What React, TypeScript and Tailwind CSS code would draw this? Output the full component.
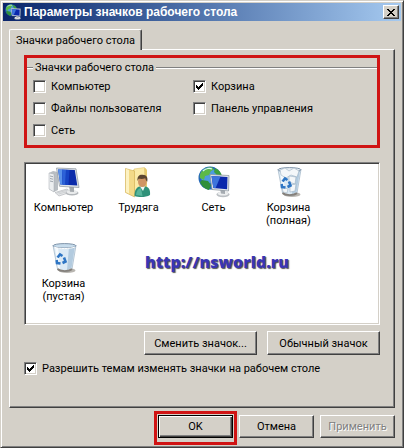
import { useState, type ReactNode } from "react";

const RAISED =
  "border border-t-white border-l-white border-r-[#404040] border-b-[#404040] shadow-[inset_-1px_-1px_0_#808080]";

function MonitorIcon() {
  return (
    <svg viewBox="0 0 32 32" className="size-8" aria-hidden="true">
      <path d="M1 7 5 5l5 1v18l-4 2-5-3z" fill="#b9bec3" />
      <path d="M1 7l5 1v18l-5-3z" fill="#eceef0" stroke="#a4aab0" strokeWidth=".5" />
      <path d="M2 10l3 .7M2 12.500l3 .7M2 15l3 .7" stroke="#7d8790" strokeWidth=".7" />
      <path d="M7 26.500 19 23l4 3-12 4z" fill="#e6e8ea" stroke="#a9adb1" strokeWidth=".6" />
      <path d="M9 27l11-3M10.500 28l11-3" stroke="#b4b8bc" strokeWidth=".5" />
      <ellipse cx="24" cy="27" rx="6.500" ry="2.600" fill="#b3b7bb" />
      <ellipse cx="24" cy="26" rx="5.500" ry="2" fill="#e9ebec" />
      <path d="M21 20l5 1v5l-4-.3z" fill="#a4a9ae" />
      <path d="M8.500 2l19.500.8 3 18.700-19.500-1.200z" fill="#dfe3e8" stroke="#8d959e" strokeWidth=".7" />
      <path d="M10 3.400l16.800.7 2.500 15.500-17-1z" fill="#0c2baa" />
      <path d="M10 3.400l4 .2.500 15.200-2.200-.2z" fill="#5a93ea" />
      <path d="M14 3.600l4 .1-.5 15.200-3-.1z" fill="#2c62d8" />
      <path d="M18 3.700l3.500.2-1 15.200-3-.2z" fill="#1644c4" />
    </svg>
  );
}

function UserFolderIcon() {
  return (
    <svg viewBox="0 0 32 32" className="size-8" aria-hidden="true">
      <path d="M10 4l12.500-2 1.500 2v23l-12 3z" fill="#e6cb70" />
      <path d="M11 3l10.500-1.500.8 25L11 29z" fill="#fbeaa6" stroke="#d8ba62" strokeWidth=".5" />
      <path d="M2.500 2.500l9 2.500V31l-9-4.500z" fill="#f3da88" stroke="#d0ae50" strokeWidth=".6" />
      <path d="M3 3l3 .9v23.600l-3-1.400z" fill="#fdf2c2" />
      <path d="M11.500 30c0-6 2-9 5.500-9.500h5c4 .5 5.500 3.500 5 8.500-4 2.500-11 2.700-15.500 1z" fill="#2f9179" />
      <path d="M13 29c.3-4 2-6.500 5-7l1.500 8z" fill="#57b59b" />
      <path d="M17 20.500h5l-2 4.500z" fill="#f3f8f4" />
      <ellipse cx="19.300" cy="15.800" rx="4.300" ry="5.300" fill="#cf9564" />
      <path d="M14.500 15c-.5-5 2-6.500 5.200-6.200 4 0 5.500 3 4.500 7-1-1-1.500-2-2-3.500-2.500 1-5 .5-6.500.5z" fill="#5b4530" />
    </svg>
  );
}

function NetworkIcon({ className }: { className?: string }) {
  return (
    <svg viewBox="0 0 32 32" className={className} aria-hidden="true">
      <circle cx="12" cy="12" r="11.500" fill="#2468b8" />
      <circle cx="10.500" cy="9.500" r="8" fill="#4d9be0" />
      <path d="M3 6C6 2 10 .8 14 1.200l2 2.300-3 1.500-2 4-4 1-1 4-4-2c-.5-2 0-4 1-6z" fill="#5cb947" />
      <path d="M17 2c4 1.500 6 4.500 7 8l-5-1-3-3z" fill="#3c9f3f" />
      <path d="M4 14l6 1 3 4-2 5C7 23 3.500 20 2 16z" fill="#2f8f3b" />
      <path d="M5 5c3-3 7-3 9-2" stroke="#d7f5ff" strokeWidth="1.200" fill="none" />
      <ellipse cx="25" cy="28.500" rx="6.500" ry="2.700" fill="#bbbfc3" />
      <ellipse cx="25" cy="27.600" rx="5.500" ry="2" fill="#eceeef" />
      <path d="M22 23l5 .5v4.500l-4-.5z" fill="#a5abb1" />
      <path d="M12 8.500l19 1-.5 15.500L14 23.500z" fill="#e3e7ea" stroke="#87909a" strokeWidth=".7" />
      <path d="M13.500 10l16 1-.4 12.300L15.300 22z" fill="#0b29ac" />
      <path d="M13.500 10l9 .6-5 11.600-2.200-.2z" fill="#3d74dc" />
    </svg>
  );
}

function RecycleBinIcon({ full }: { full?: boolean }) {
  return (
    <svg viewBox="0 0 32 32" className="size-8" aria-hidden="true">
      <ellipse cx="19" cy="28.500" rx="8.500" ry="2.500" fill="#b9b6b1" />
      <path d="M5 3.500 28 3.500 24 27c-2.500 3-11.500 3-14.500 0z" fill="#dceaf5" stroke="#9fb3c4" strokeWidth=".7" />
      <path d="M21 5l6-1-3.500 22-4.500 2z" fill="#b3cbdf" />
      <path d="M7 5l3-.5 2 23-2-1z" fill="#f6fbfe" />
      <ellipse cx="16.500" cy="3.800" rx="11.500" ry="2.200" fill={full ? "#e8eef3" : "#c7dcec"} stroke="#7389a0" strokeWidth=".9" />
      {full ? (
        <g fill="#f4f7f9" stroke="#a0b3c4" strokeWidth=".6">
          <path d="M7 4l5-2 4 3 5-3 5 3-2 6-6-2-5 3-5-3z" />
          <path d="M16 10l7 1-1 7-6-2zM17 19l6-1-1 7-5 1zM9 21l6 2-1 4-4-1z" />
        </g>
      ) : (
        <path d="M6 5c5 2 16 2 21 0" stroke="#fff" strokeWidth="1" fill="none" />
      )}
      <g fill="none" stroke="#2f76c4" strokeWidth="2.600">
        <path d="M9.500 15.500l2.500-3 2.500 1.500" />
        <path d="M16 15.500l1.500 4-3 1.500" />
        <path d="M12.500 21.500l-3.500-.5-.3-3" />
      </g>
      <path d="M9.500 27c3 2.700 11.500 2.700 14.500 0" stroke="#85807b" strokeWidth="1.700" fill="none" />
    </svg>
  );
}

function CheckBox({
  label,
  checked,
  onChange,
}: {
  label: string;
  checked: boolean;
  onChange: () => void;
}) {
  return (
    <label className="flex h-[13px] items-center gap-[5px] whitespace-nowrap">
      <span className="grid size-[13px] shrink-0">
        <input
          type="checkbox"
          checked={checked}
          onChange={onChange}
          className="col-start-1 row-start-1 size-[13px] appearance-none border border-t-[#808080] border-l-[#808080] border-r-white border-b-white bg-white shadow-[inset_1px_1px_0_#404040,inset_-1px_-1px_0_#d4d0c8]"
        />
        {checked && (
          <svg
            viewBox="0 0 13 13"
            shapeRendering="crispEdges"
            className="pointer-events-none col-start-1 row-start-1 size-[13px]"
            aria-hidden="true"
          >
            <path d="M3 5h1v1h1v1h1v-1h1v-1h1v-1h1v-1h1v3h-1v1h-1v1h-1v1h-1v1h-1v-1h-1v-1h-1z" />
          </svg>
        )}
      </span>
      {label}
    </label>
  );
}

function PushButton({
  children,
  className,
  disabled,
}: {
  children: ReactNode;
  className: string;
  disabled?: boolean;
}) {
  return (
    <button
      type="button"
      disabled={disabled}
      className={`flex items-center justify-center whitespace-nowrap bg-[#d4d0c8] disabled:text-[#808080] disabled:text-shadow-[1px_1px_0_#fff] ${className}`}
    >
      {children}
    </button>
  );
}

const desktopItems = [
  { label: "Компьютер", icon: <MonitorIcon /> },
  { label: "Трудяга", icon: <UserFolderIcon /> },
  { label: "Сеть", icon: <NetworkIcon className="size-8" /> },
  { label: "Корзина (полная)", icon: <RecycleBinIcon full /> },
  { label: "Корзина (пустая)", icon: <RecycleBinIcon /> },
];

const options = [
  "Компьютер",
  "Корзина",
  "Файлы пользователя",
  "Панель управления",
  "Сеть",
];

export default function App() {
  const [shown, setShown] = useState<string[]>(["Корзина"]);
  const [allowThemes, setAllowThemes] = useState(true);

  const toggle = (name: string) => {
    setShown((prev) =>
      prev.includes(name) ? prev.filter((n) => n !== name) : [...prev, name],
    );
  };

  return (
    <main className="border border-t-[#d4d0c8] border-l-[#d4d0c8] border-r-[#404040] border-b-[#404040] bg-[#d4d0c8] p-[2px] font-[Roboto,sans-serif] text-[11px] leading-[13px] text-black shadow-[inset_1px_1px_0_#fff,inset_-1px_-1px_0_#808080]">
      <header className="flex h-[18px] items-center gap-[3px] bg-linear-to-r from-[#0a246a] to-[#a6caf0] px-[2px]">
        <NetworkIcon className="size-4" />
        <h1 className="flex-1 whitespace-nowrap font-['Liberation_Sans',sans-serif] text-[12px] font-bold text-white">
          Параметры значков рабочего стола
        </h1>
        <button
          type="button"
          aria-label="Закрыть"
          className={`flex h-[14px] w-4 items-center justify-center bg-[#d4d0c8] ${RAISED}`}
        >
          <svg viewBox="0 0 8 7" className="h-[7px] w-2" shapeRendering="crispEdges" aria-hidden="true">
            <path d="M0 0h2v1h1v1h2v-1h1v-1h2v1h-1v1h-1v1h-1v1h1v1h1v1h1v1h-2v-1h-1v-1h-2v1h-1v1h-2v-1h1v-1h1v-1h1v-1h-1v-1h-1v-1h-1z" />
          </svg>
        </button>
      </header>

      <div className="px-[6px] pt-2">
        <div role="tablist" className="relative z-10 flex">
          <button
            type="button"
            role="tab"
            aria-selected="true"
            className="-mb-px h-[21px] w-[133px] whitespace-nowrap rounded-t-[2px] border border-b-0 border-t-white border-l-white border-r-[#404040] bg-[#d4d0c8] text-center shadow-[inset_-1px_0_0_#808080]"
          >
            Значки рабочего стола
          </button>
        </div>

        <section
          role="tabpanel"
          className="border border-t-white border-l-white border-r-[#404040] border-b-[#404040] px-[14px] pt-[5px] pb-8 shadow-[inset_-1px_-1px_0_#808080]"
        >
          <div className="border-3 border-[#d01414] pt-[3px] pb-2">
            <fieldset className="border-t border-[#808080] px-[6px] shadow-[inset_0_1px_0_#fff]">
              <legend className="bg-[#d4d0c8] px-[2px]">
                Значки рабочего стола
              </legend>
              <div className="grid grid-cols-[160px_1fr] gap-y-[9px] pt-[6px]">
                {options.map((name) => (
                  <CheckBox
                    key={name}
                    label={name}
                    checked={shown.includes(name)}
                    onChange={() => toggle(name)}
                  />
                ))}
              </div>
            </fieldset>
          </div>

          <div className="relative mt-[14px] border border-t-[#808080] border-l-[#808080] border-r-white border-b-white bg-white pt-[3px] pb-[6px] pl-px shadow-[inset_1px_1px_0_#404040,inset_-1px_-1px_0_#d4d0c8]">
            <ul className="flex flex-wrap">
              {desktopItems.map((item) => (
                <li
                  key={item.label}
                  className="flex h-[76px] w-[75px] flex-col items-center gap-[3px] px-3 text-center"
                >
                  {item.icon}
                  <span>{item.label}</span>
                </li>
              ))}
            </ul>
            <a
              href="http://nsworld.ru"
              className="absolute top-[89px] left-[120px] font-['Open_Sans',sans-serif] text-[16px] leading-5 font-extrabold text-[#3a36b4] text-shadow-[1px_1px_1px_#555]"
            >
              http://nsworld.ru
            </a>
          </div>

          <div className="mt-[6px] flex justify-end gap-[10px]">
            <PushButton className={`h-6 w-[113px] ${RAISED}`}>
              Сменить значок...
            </PushButton>
            <PushButton className={`h-6 w-[113px] ${RAISED}`}>
              Обычный значок
            </PushButton>
          </div>

          <div className="mt-[7px] flex">
            <CheckBox
              label="Разрешить темам изменять значки на рабочем столе"
              checked={allowThemes}
              onChange={() => setAllowThemes(!allowThemes)}
            />
          </div>
        </section>

        <footer className="mt-[3px] flex justify-end">
          <div className="border-3 border-[#d01414] px-px pt-px pb-1">
            <PushButton className="h-[23px] w-[75px] border border-black shadow-[inset_1px_1px_0_#fff,inset_-1px_-1px_0_#404040,inset_-2px_-2px_0_#808080]">
              OK
            </PushButton>
          </div>
          <div className="ml-[2px] flex gap-[6px] pt-1">
            <PushButton className={`h-[23px] w-[75px] ${RAISED}`}>
              Отмена
            </PushButton>
            <PushButton disabled className={`h-[23px] w-[75px] ${RAISED}`}>
              Применить
            </PushButton>
          </div>
        </footer>
      </div>
    </main>
  );
}
